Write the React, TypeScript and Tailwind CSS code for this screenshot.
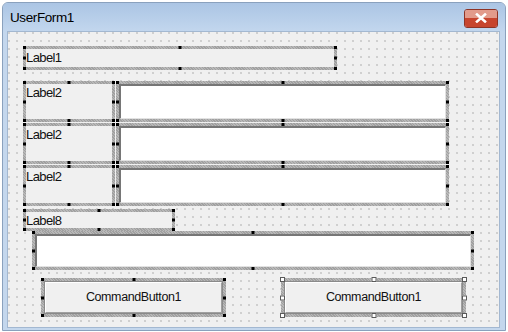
import React from 'react';

const font = "font-['Liberation_Sans',Arial,sans-serif]";
const hatch =
  'bg-[repeating-linear-gradient(45deg,#a0a0a0_0px,#a0a0a0_1px,#b8b8b8_1px,#b8b8b8_2px)]';

const dotHandles = [
  'left-0 top-0',
  'left-1/2 -translate-x-1/2 top-0',
  'right-0 top-0',
  'left-0 top-1/2 -translate-y-1/2',
  'right-0 top-1/2 -translate-y-1/2',
  'left-0 bottom-0',
  'left-1/2 -translate-x-1/2 bottom-0',
  'right-0 bottom-0',
];

const boxHandles = [
  '-left-px -top-px',
  'left-1/2 -translate-x-1/2 -top-px',
  '-right-px -top-px',
  '-left-px top-1/2 -translate-y-1/2',
  '-right-px top-1/2 -translate-y-1/2',
  '-left-px -bottom-px',
  'left-1/2 -translate-x-1/2 -bottom-px',
  '-right-px -bottom-px',
];

function Selected({
  className,
  primary = false,
  children,
}: {
  className: string;
  primary?: boolean;
  children: React.ReactNode;
}) {
  return (
    <div className={`relative p-[3px] ${hatch} ${className}`}>
      {children}
      {(primary ? boxHandles : dotHandles).map((pos) => (
        <span
          key={pos}
          className={
            primary
              ? `absolute w-[5px] h-[5px] bg-white border border-[#5a5a5a] ${pos}`
              : `absolute w-[3px] h-[3px] bg-black ${pos}`
          }
        />
      ))}
    </div>
  );
}

function Label({ text, className }: { text: string; className: string }) {
  return (
    <Selected className={className}>
      <div className={`h-full bg-[#f0f0f0] text-[13px] leading-[15px] tracking-[-0.6px] text-[#111] pt-px ${font}`}>
        {text}
      </div>
    </Selected>
  );
}

function TextBox({ className }: { className: string }) {
  return (
    <Selected className={className}>
      <div className="h-full bg-white border-t-2 border-l-2 border-t-[#767676] border-l-[#767676] border-r border-b border-r-[#e2e2e2] border-b-[#e2e2e2]" />
    </Selected>
  );
}

function Button({ className, primary = false }: { className: string; primary?: boolean }) {
  return (
    <Selected className={className} primary={primary}>
      <div className="h-full border border-[#8a8a8a]">
        <div
          className={`h-full flex items-center justify-center bg-[#f0f0f0] border-t border-l border-white border-r border-b border-r-[#a0a0a0] border-b-[#a0a0a0] text-[12.5px] tracking-[-0.4px] text-[#111] ${font}`}
        >
          CommandButton1
        </div>
      </div>
    </Selected>
  );
}

function Row() {
  return (
    <div className="flex gap-px ml-[15px] h-[41px]">
      <Label text="Label2" className="w-[92px] h-full" />
      <TextBox className="w-[333px] h-full" />
    </div>
  );
}

export default function App() {
  return (
    <div className="w-[508px] h-[332px] bg-white pt-[2px] pl-[2px] overflow-hidden">
      <div className="w-[504px] h-[329px] rounded-t-[6px] border border-[#8aa1bd] bg-[#c4d7ed] flex flex-col">
        <div className="h-[29px] flex items-center justify-between pl-[7px] pr-[7px] rounded-t-[5px] bg-gradient-to-b from-[#abc5e4] to-[#c3d7ee]">
          <span className={`text-[13.5px] tracking-[-0.4px] text-black pt-[2px] ${font}`}>UserForm1</span>
          <div className="w-[34px] h-[19px] mt-[1px] rounded-[3px] border border-[#8e3426] overflow-hidden flex flex-col relative">
            <div className="h-1/2 bg-[#e29b8b]" />
            <div className="h-1/2 bg-[#c7452e]" />
            <svg className="absolute inset-0 m-auto" width="12" height="10" viewBox="0 0 12 10">
              <path d="M2 1.5 L10 8.5 M10 1.5 L2 8.5" stroke="#ffffff" strokeWidth="2.6" strokeLinecap="square" />
            </svg>
          </div>
        </div>
        <div className="ml-[5px] w-[491px] h-[295px] shadow-[0_0_0_1px_#a3b8d1] bg-[#f0f0f0] bg-[radial-gradient(circle_at_1px_1px,#bdbdbd_0.6px,transparent_0.9px)] bg-[length:8px_8px] flex flex-col">
          <Label text="Label1" className="ml-[15px] mt-[14px] w-[314px] h-[24px]" />
          <div className="mt-[11px] flex flex-col gap-px">
            <Row />
            <Row />
            <Row />
          </div>
          <Label text="Label8" className="ml-[15px] mt-[3px] w-[152px] h-[22px]" />
          <TextBox className="ml-[24px] w-[442px] h-[39px]" />
          <div className="mt-[8px] flex">
            <Button className="ml-[33px] w-[185px] h-[39px]" />
            <Button className="ml-[55px] w-[185px] h-[39px]" primary />
          </div>
        </div>
      </div>
    </div>
  );
}
